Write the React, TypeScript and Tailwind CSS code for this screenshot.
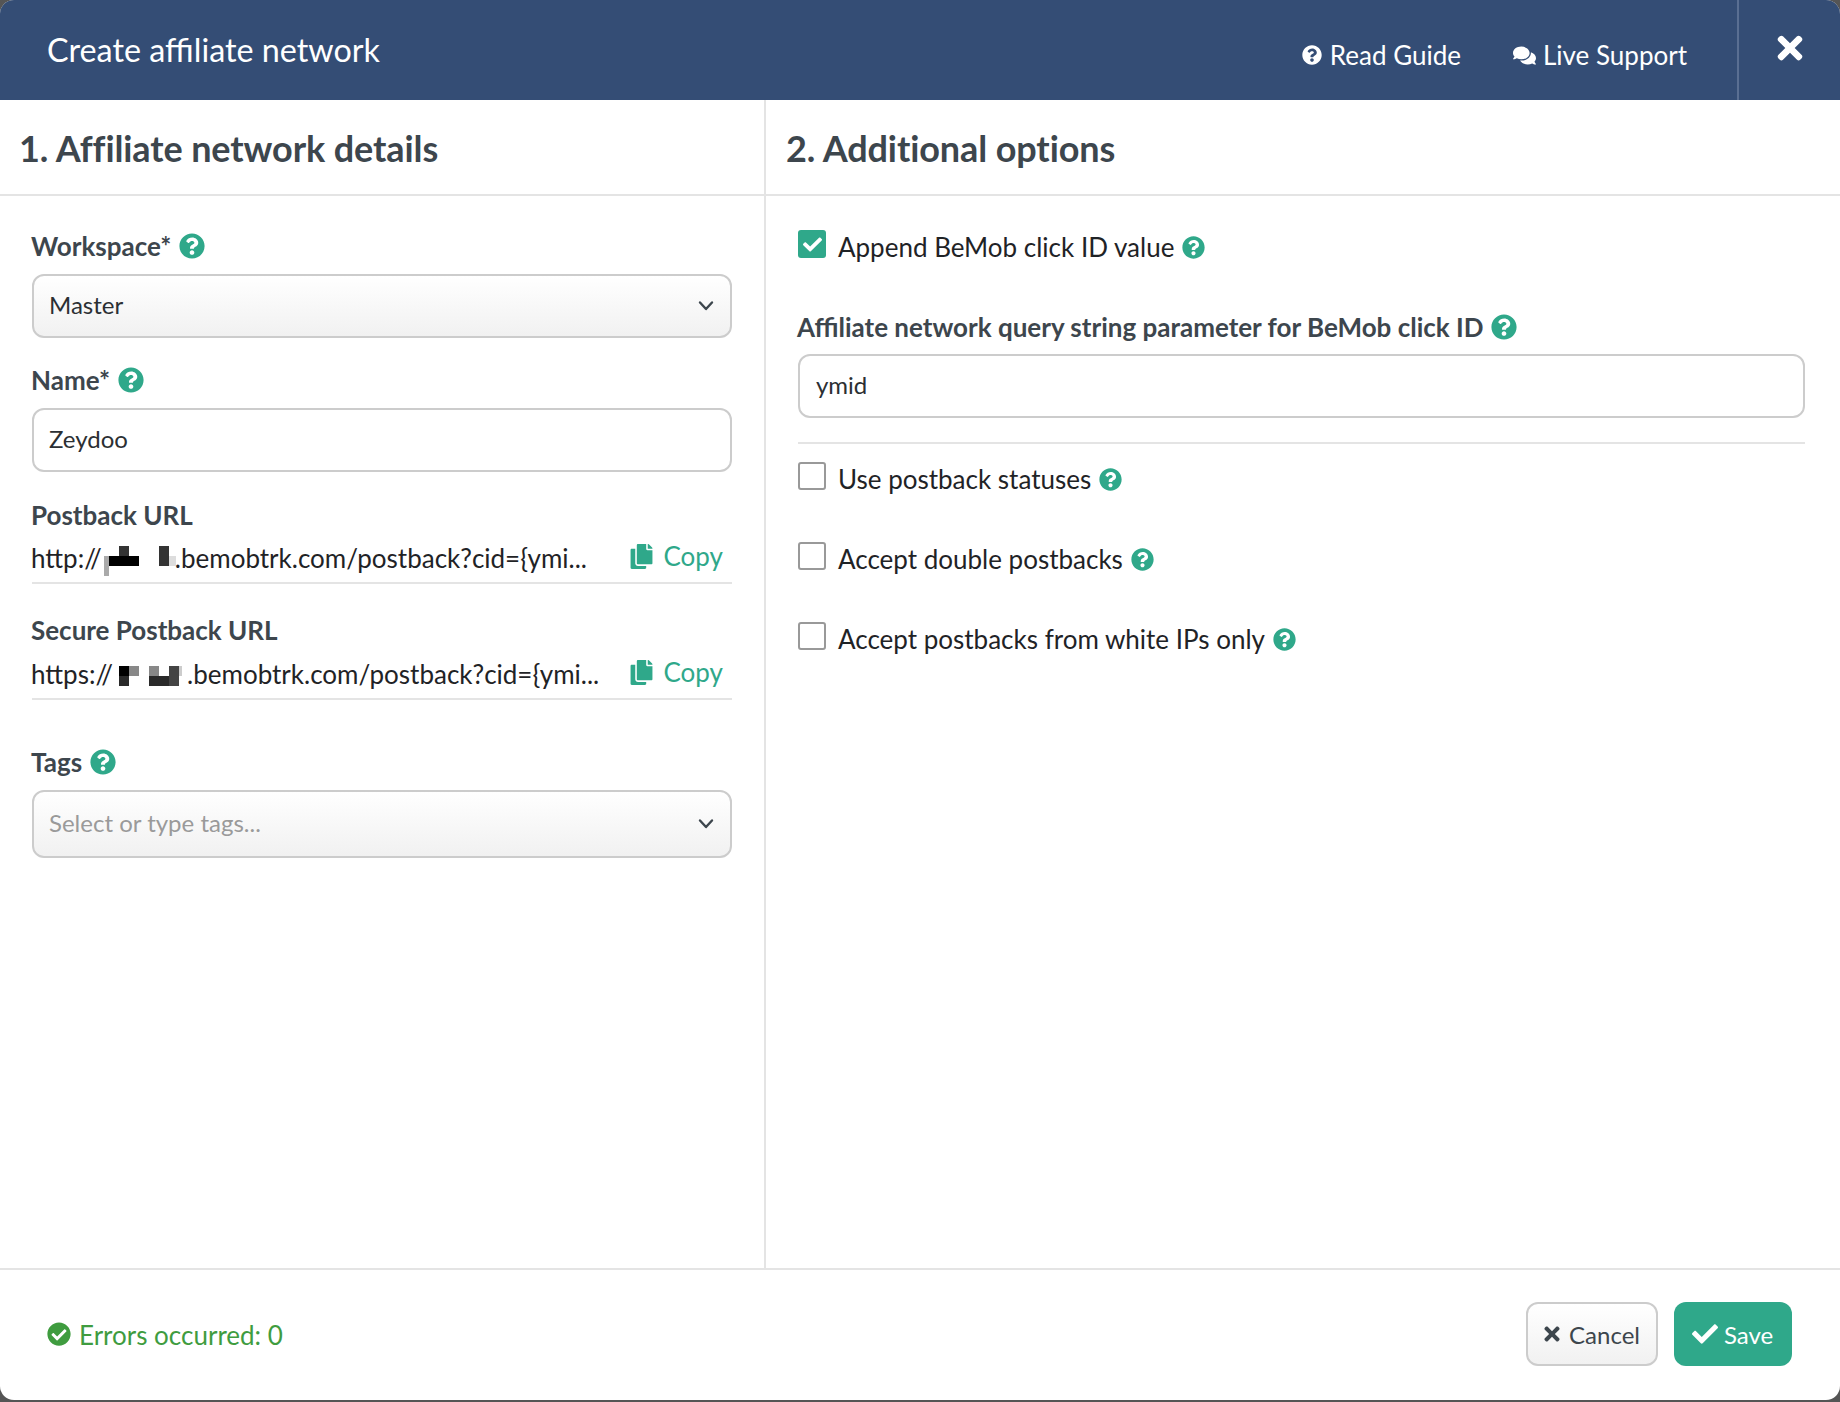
import React from "react";
import { FaQuestionCircle, FaComments, FaTimes, FaCopy, FaCheck, FaCheckCircle } from "react-icons/fa";

function Help({ className = "text-[26px]" }: { className?: string }) {
  return <FaQuestionCircle className={"text-[#2fa88a] shrink-0 ml-[8px] " + className} />;
}

function Label({ children }: { children: React.ReactNode }) {
  return (
    <div className="flex h-[36px] items-center">
      <span className="text-[26px] font-bold text-[#3d464d] -ml-[1px]">{children}</span>
      <Help />
    </div>
  );
}

function Chevron() {
  return (
    <svg width="16" height="11" viewBox="0 0 16 11" className="absolute right-[16px] top-1/2 -translate-y-1/2">
      <path d="M2 2 L8 8.5 L14 2" fill="none" stroke="#3d464d" strokeWidth="2.4" strokeLinecap="round" strokeLinejoin="round" />
    </svg>
  );
}

function Box({ children, h = "h-[64px]", select = false }: { children: React.ReactNode; h?: string; select?: boolean }) {
  return (
    <div
      className={
        "relative flex items-center rounded-[12px] border-2 border-[#cccccc] px-[15px] pb-[2px] text-[24px] text-[#2b2f33] " +
        h +
        (select ? " bg-gradient-to-b from-white to-[#f1f1f1]" : " bg-white")
      }
    >
      {children}
      {select && <Chevron />}
    </div>
  );
}

function UrlRow({ children, className = "" }: { children: React.ReactNode; className?: string }) {
  return (
    <div className={"relative flex items-start border-b-2 border-[#e4e4e4] " + className}>
      <div className="flex h-[36px] flex-1 items-center -ml-[1px] text-[26px] text-[#1f2326] whitespace-nowrap">{children}</div>
      <div className="flex h-[36px] items-center pr-[9px] text-[26px] text-[#2fa88a] -mt-[2px]">
        <FaCopy className="mr-[10px] text-[25px]" />
        Copy
      </div>
    </div>
  );
}

function Check({ label, checked = false }: { label: string; checked?: boolean }) {
  return (
    <div className="flex h-[36px] items-center">
      {checked ? (
        <span className="mr-[12px] flex h-[28px] w-[28px] -mt-[6px] items-center justify-center rounded-[3px] bg-[#2fa88a]">
          <FaCheck className="text-[19px] text-white" />
        </span>
      ) : (
        <span className="mr-[12px] h-[28px] w-[28px] -mt-[6px] rounded-[3px] border-2 border-[#999999] bg-white" />
      )}
      <span className="text-[26px] text-[#1f2326]">{label}</span>
      <Help className="text-[23px]" />
    </div>
  );
}

export default function App() {
  return (
    <div className="h-[1402px] w-[1840px] bg-[#555555] [font-family:Lato,sans-serif]">
      <div className="flex h-[1400px] w-full flex-col overflow-hidden rounded-[14px] bg-white">
        <header className="flex h-[100px] shrink-0 items-center bg-[#344d75] pl-[47px] text-white">
          <h1 className="flex-1 text-[32.3px]">Create affiliate network</h1>
          <div className="flex items-center text-[26px] mr-[52px] mt-[10px]">
            <FaQuestionCircle className="mr-[8px] text-[20px]" />
            Read Guide
          </div>
          <div className="flex items-center text-[26px] mr-[50px] mt-[10px]">
            <FaComments className="mr-[7px] text-[23px]" />
            Live Support
          </div>
          <div className="flex h-full w-[103px] items-center justify-center border-l-2 border-[#5a6f92]">
            <FaTimes className="text-[36px] -mt-[4px]" />
          </div>
        </header>

        <main className="flex h-[1168px] shrink-0">
          <section className="w-[766px] shrink-0 border-r-2 border-[#e4e4e4]">
            <div className="flex h-[96px] items-center border-b-2 border-[#e4e4e4] pl-[19px]">
              <h2 className="text-[36px] font-bold tracking-[-0.1px] text-[#3d464d] mt-[2px]">1. Affiliate network details</h2>
            </div>
            <div className="w-[700px] ml-[32px]">
              <div className="mt-[32px]">
                <Label>Workspace*</Label>
              </div>
              <div className="mt-[10px]">
                <Box select>Master</Box>
              </div>
              <div className="mt-[24px]">
                <Label>Name*</Label>
              </div>
              <div className="mt-[10px]">
                <Box>Zeydoo</Box>
              </div>
              <div className="mt-[25px] flex h-[36px] items-center text-[26px] font-bold text-[#3d464d] -ml-[1px]">Postback URL</div>
              <UrlRow className="mt-[7px] h-[44px]">
                <span>http://</span>
                <span className="inline-block w-[73px]" />
                <span>.bemobtrk.com/postback?cid={"{"}ymi...</span>
                <span className="absolute left-[72px] top-[16px] h-[20px] w-[5px] bg-[#aaaaaa]" />
                <span className="absolute left-[77px] top-[16px] h-[10px] w-[30px] bg-black" />
                <span className="absolute left-[87px] top-[6px] h-[10px] w-[10px] bg-[#333333]" />
                <span className="absolute left-[127px] top-[6px] h-[20px] w-[10px] bg-[#333333]" />
                <span className="absolute left-[137px] top-[16px] h-[10px] w-[7px] bg-[#dddddd]" />
              </UrlRow>
              <div className="mt-[28px] flex h-[36px] items-center text-[26px] font-bold text-[#3d464d] -ml-[1px]">Secure Postback URL</div>
              <UrlRow className="mt-[8px] h-[44px]">
                <span>https://</span>
                <span className="inline-block w-[74px]" />
                <span>.bemobtrk.com/postback?cid={"{"}ymi...</span>
                <span className="absolute left-[87px] top-[10px] h-[10px] w-[10px] bg-black" />
                <span className="absolute left-[87px] top-[20px] h-[10px] w-[10px] bg-[#2a2a2a]" />
                <span className="absolute left-[97px] top-[10px] h-[10px] w-[10px] bg-[#888888]" />
                <span className="absolute left-[117px] top-[10px] h-[10px] w-[10px] bg-[#888888]" />
                <span className="absolute left-[117px] top-[20px] h-[10px] w-[20px] bg-[#2a2a2a]" />
                <span className="absolute left-[137px] top-[10px] h-[20px] w-[10px] bg-[#444444]" />
                <span className="absolute left-[147px] top-[10px] h-[10px] w-[3px] bg-[#cccccc]" />
              </UrlRow>
              <div className="mt-[44px]">
                <Label>Tags</Label>
              </div>
              <div className="mt-[10px]">
                <Box select h="h-[68px]">
                  <span className="text-[#9a9a9a]">Select or type tags...</span>
                </Box>
              </div>
            </div>
          </section>

          <section className="flex-1">
            <div className="flex h-[96px] items-center border-b-2 border-[#e4e4e4] pl-[20px]">
              <h2 className="text-[36px] font-bold tracking-[-0.1px] text-[#3d464d] mt-[2px]">2. Additional options</h2>
            </div>
            <div className="ml-[32px] w-[1007px]">
              <div className="mt-[33px]">
                <Check label="Append BeMob click ID value" checked />
              </div>
              <div className="mt-[44px]">
                <Label>Affiliate network query string parameter for BeMob click ID</Label>
              </div>
              <div className="mt-[9px]">
                <Box>
                  <span className="ml-[1px]">ymid</span>
                </Box>
              </div>
              <div className="mt-[24px] h-[2px] bg-[#e4e4e4]" />
              <div className="mt-[17px] flex flex-col gap-[44px]">
                <Check label="Use postback statuses" />
                <Check label="Accept double postbacks" />
                <Check label="Accept postbacks from white IPs only" />
              </div>
            </div>
          </section>
        </main>

        <footer className="flex flex-1 items-center border-t-2 border-[#e4e4e4] pb-[2px] pl-[47px] pr-[48px]">
          <FaCheckCircle className="mr-[8px] text-[24px] text-[#3f9c3f]" />
          <span className="flex-1 text-[26px] text-[#3f9c3f] mt-[2px]">Errors occurred: 0</span>
          <button className="flex h-[64px] w-[132px] items-center justify-center rounded-[12px] border-2 border-[#cccccc] bg-gradient-to-b from-white to-[#f1f1f1] pr-[3px] text-[24px] text-[#3d464d]">
            <FaTimes className="mr-[6px] text-[22px]" />
            <span className="mt-[1px]">Cancel</span>
          </button>
          <button className="ml-[16px] flex h-[64px] w-[118px] items-center justify-center rounded-[12px] bg-[#2fa88a] pr-[1px] text-[24px] text-white">
            <FaCheck className="mr-[6px] text-[26px]" />
            <span className="mt-[1px]">Save</span>
          </button>
        </footer>
      </div>
    </div>
  );
}
